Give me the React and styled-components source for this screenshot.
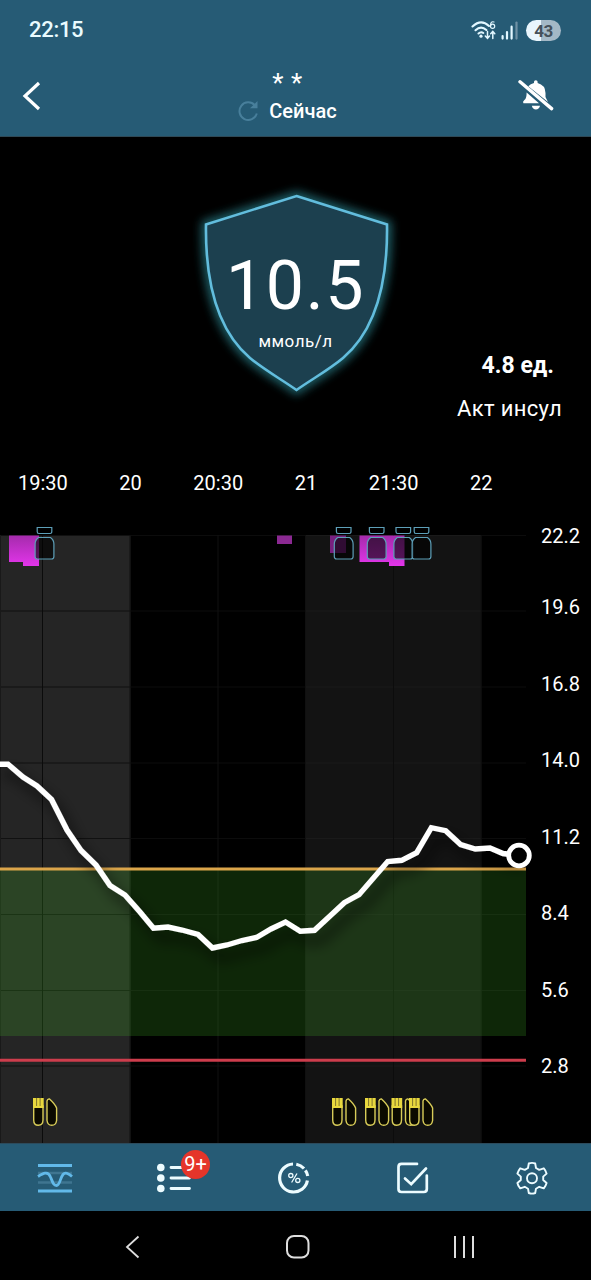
import React from "react";
import styled, { createGlobalStyle } from "styled-components";

const GlobalStyle = createGlobalStyle`
  * { box-sizing: border-box; }
  body { margin: 0; background: #000; }
`;

const Screen = styled.div`
  width: 591px;
  height: 1280px;
  display: flex;
  flex-direction: column;
  overflow: hidden;
  background: #000;
  color: #fff;
  font-family: Roboto, "Noto Sans", sans-serif;
`;

const Header = styled.header`
  height: 137px;
  flex: none;
  background: #265b75;
  border-bottom: 1px solid #2f4956;
`;

const StatusBar = styled.div`
  height: 60px;
  display: flex;
  align-items: center;
  padding: 0 30px 0 29px;
`;

const Clock = styled.span`
  flex: 1;
  font-size: 22px;
  line-height: 26px;
  font-weight: 500;
  color: #e9fbff;
  letter-spacing: -0.3px;
`;

const Battery = styled.span`
  width: 35px;
  height: 21px;
  margin-left: 6px;
  border-radius: 11px;
  background: linear-gradient(90deg, #e9f6fd 43%, #a4b8c6 43%);
  color: #45505a;
  font-size: 17px;
  line-height: 22px;
  font-weight: 700;
  text-align: center;
  letter-spacing: -0.5px;
`;

const TitleBar = styled.div`
  height: 76px;
  display: flex;
  align-items: center;
  justify-content: space-between;
  padding: 0 36px 4px 22px;
`;

const TitleGroup = styled.div`
  display: flex;
  flex-direction: column;
  align-items: center;
  padding-left: 16px;
`;

const Stars = styled.div`
  font-size: 26px;
  line-height: 30px;
  height: 30px;
  padding-top: 4px;
  letter-spacing: 0.6px;
`;

const Updated = styled.div`
  display: flex;
  align-items: center;
  gap: 9px;
  height: 34px;
  font-size: 20px;
  line-height: 24px;
  font-weight: 500;
`;

const Hero = styled.section`
  position: relative;
  height: 320px;
  flex: none;
  display: flex;
  justify-content: center;
  padding-top: 43px;
`;

const Shield = styled.div`
  width: 210px;
  height: 220px;
  display: grid;
  > * { grid-area: 1 / 1; }
`;

const Reading = styled.div`
  display: flex;
  flex-direction: column;
  align-items: center;
  padding-top: 66px;
  z-index: 1;
`;

const Value = styled.div`
  font-size: 68px;
  line-height: 80px;
  letter-spacing: 1.6px;
`;

const Unit = styled.div`
  font-size: 17px;
  line-height: 20px;
  margin-top: 5px;
  letter-spacing: 0.5px;
`;

const Insulin = styled.div`
  position: absolute;
  right: 29px;
  top: 215px;
  text-align: right;
`;

const Dose = styled.div`
  padding-right: 8px;
  font-size: 23px;
  line-height: 28px;
  font-weight: 700;
`;

const DoseLabel = styled.div`
  margin-top: 16px;
  font-size: 22px;
  line-height: 26px;
  letter-spacing: 0.35px;
`;

const TimeAxis = styled.div`
  display: grid;
  grid-template-columns: repeat(6, 87.7px);
  margin-left: -1px;
  height: 63px;
  flex: none;
  padding-top: 14px;
  font-size: 20px;
  line-height: 24px;
  text-align: center;
`;

const ChartRow = styled.section`
  height: 623px;
  flex: none;
  display: flex;
`;

const Plot = styled.svg`
  display: block;
  flex: none;
`;

const Scale = styled.div`
  padding: 4px 0 0 9px;
  font-size: 20px;
  line-height: 24px;
`;

const Tick = styled.div`
  height: ${(p) => p.$h}px;
`;

const TabBar = styled.nav`
  height: 68px;
  flex: none;
  display: grid;
  grid-template-columns: 115px 120px 118px 119px 119px;
  align-items: center;
  justify-items: center;
  background: #265b75;
  border-top: 1px solid #2c4b5c;
`;

const Tab = styled.div`
  position: relative;
  width: 36px;
  height: 36px;
  display: flex;
  margin-left: ${(p) => p.$shift || 0}px;
`;

const Badge = styled.span`
  position: absolute;
  left: 24px;
  top: -10px;
  width: 29px;
  height: 29px;
  border-radius: 50%;
  background: #e5352a;
  font-size: 20px;
  line-height: 29px;
  text-align: center;
`;

const SystemBar = styled.div`
  height: 69px;
  flex: none;
  display: flex;
  align-items: center;
  justify-content: space-between;
  padding: 3px 115px 0 123px;
`;

const times = ["19:30", "20", "20:30", "21", "21:30", "22"];
const ticks = [["22.2", 71], ["19.6", 76.5], ["16.8", 76.5], ["14.0", 76.5], ["11.2", 76.5], ["8.4", 76.5], ["5.6", 76.5], ["2.8", 40]];
const gridY = [535.5, 611, 687, 763, 838.5, 914.5, 990.5, 1066];
const gridX = [42.5, 130, 218, 305.5, 393.5, 481];
const trend =
  "-4,764.3 8,764.3 23,777 37,786 51.5,799.5 67,830 81,850.5 96,865 110,885.5 125,895 140,912 153.5,928.3 168,927 182,930 198,934.5 212.5,948 227,945 242,940.5 256.5,937.5 271,929 285.5,922 300.3,931.3 314.5,930.3 330,916 344.3,902.7 359,894.7 387.7,861.5 401.7,860.3 416.7,852.7 431.3,827.7 445.7,830.7 460.7,844.7 475.3,849 490,848 503,853.5 519,855.5";

function Vial({ x }) {
  return (
    <g transform={`translate(${x} 527)`} fill="#00000099" stroke="#5d9fb8" strokeWidth="1.2">
      <path d="M2.7.5H17.3V4.5Q17.3 6.5 15.8 6.5H4.2Q2.7 6.5 2.7 4.5Z" />
      <path d="M4 10.5H16Q19.4 13 19.4 17V29.5Q19.4 32 17 32H3Q.6 32 .6 29.5V17Q.6 13 4 10.5Z" />
    </g>
  );
}

function Meal({ x }) {
  return (
    <g transform={`translate(${x} 1098)`} fill="#0b0a00" stroke="#d8cc58" strokeWidth="1.4">
      <path d="M.7 8V22Q.7 27.3 5.3 27.3T10 22V8Z" />
      <path d="M0 0H10.7V10H0Z" fill="#e8d83e" stroke="none" />
      <path d="M3.6 0V8M7.1 0V8" stroke="#81742a" strokeWidth="1" />
      <path d="M14 3Q14.5 .7 16.5 1Q22 6 23.6 10V22.5Q23 27.3 18.8 27.3T14 22.5Z" />
    </g>
  );
}

function Chart() {
  return (
    <Plot width="532" height="623" viewBox="0 520 532 623">
      <defs>
        <linearGradient id="basal" x1="0" y1="0" x2="0" y2="1">
          <stop offset="0" stopColor="#a52bac" />
          <stop offset="1" stopColor="#e335eb" />
        </linearGradient>
        <filter id="lineShadow" x="-10%" y="-20%" width="120%" height="150%">
          <feDropShadow dx="7" dy="10" stdDeviation="7" floodColor="#000" floodOpacity="0.75" />
        </filter>
      </defs>
      <rect x="0" y="535" width="130.5" height="608" fill="#252525" />
      <rect x="305.5" y="535" width="176" height="608" fill="#131313" />
      <g strokeWidth="1">
        {gridY.map((y) => (
          <g key={y}>
            <path d={`M0 ${y}H130`} stroke="#111" />
            <path d={`M130 ${y}H305M481 ${y}H526`} stroke="#0c0c0c" />
            <path d={`M305 ${y}H481`} stroke="#1a1a1a" />
          </g>
        ))}
        {gridX.map((x, i) => (
          <path key={x} d={`M${x} 535V1143`} stroke={i === 0 ? "#0b0b0b" : i === 4 ? "#0c0c0c" : "#101010"} />
        ))}
        <path d="M.5 535V1143" stroke="#191919" />
      </g>
      <rect x="0" y="869" width="526" height="167" fill="rgb(70,195,40)" fillOpacity="0.2" />
      <path d="M0 869H526" stroke="#dba54a" strokeWidth="3" />
      <path d="M0 1060.3H526" stroke="#cd3d4c" strokeWidth="3" />
      <path d="M9 535.5H39V566H23V562H9Z" fill="url(#basal)" />
      <path d="M277 535.5H292V544H277Z" fill="#8b2992" />
      <path d="M330 535.5H346V553H330Z" fill="#782080" />
      <path d="M359.5 535.5H404.5V566H389V562H359.5Z" fill="url(#basal)" />
      <Vial x={34.5} />
      <Vial x={333.7} />
      <Vial x={366.7} />
      <Vial x={393.3} />
      <Vial x={411.5} />
      <Meal x={33} />
      <Meal x={332} />
      <Meal x={365} />
      <Meal x={391.5} />
      <Meal x={409} />
      <polyline points={trend} fill="none" stroke="#fff" strokeWidth="5.4" filter="url(#lineShadow)" />
      <circle cx="519" cy="855.5" r="10.3" fill="#000" stroke="#fff" strokeWidth="4.8" />
    </Plot>
  );
}

function StatusIcons() {
  return (
    <svg width="49" height="24" viewBox="0 0 49 24" fill="none" stroke="#e2f7ff" strokeLinecap="round">
      <g strokeWidth="2.1">
        <path d="M1.5 8.5Q10 .5 18 8" />
        <path d="M4.5 12.2Q10 7 15.4 12" />
        <path d="M7.5 15.5Q10 13.3 12.3 15" />
      </g>
      <circle cx="10" cy="18.2" r="1.6" fill="#e2f7ff" stroke="none" />
      <path d="M16.5 13.5V20M14.3 18L16.5 20.3L18.5 18M21.8 20.5V13.5M19.7 15.7L21.8 13.4L23.8 15.7" strokeWidth="1.5" />
      <path d="M23 4Q19.5 2.7 19.5 8" strokeWidth="1.2" />
      <circle cx="21.6" cy="8.3" r="2.1" strokeWidth="1.2" />
      <path d="M31.6 18V20.6M36 14V20.6M40.6 8.7V20.6" strokeWidth="2.2" />
      <path d="M45.5 4.5V20.6" strokeWidth="2.2" stroke="#6f91a4" />
    </svg>
  );
}

function BellOff() {
  return (
    <svg width="38" height="32" viewBox="0 0 38 32" fill="#fff">
      <path d="M11.3 6.3Q13.5 4 17 3V1.8Q17 .2 18.8 .2T20.6 1.8V3Q28.3 5 28.5 13V17L31 22Z" />
      <path d="M9.6 12.5L22 23.3H6.4Q5.2 21.8 7.4 20Q9.8 18.3 9.6 12.5Z" />
      <path d="M14.8 25.8H23Q22 29.6 18.9 29.6T14.8 25.8Z" />
      <path d="M3 1.8L34.6 28.6" stroke="#fff" strokeWidth="3.4" strokeLinecap="round" />
    </svg>
  );
}

export default function App() {
  return (
    <Screen>
      <GlobalStyle />
      <Header>
        <StatusBar>
          <Clock>22:15</Clock>
          <StatusIcons />
          <Battery>43</Battery>
        </StatusBar>
        <TitleBar>
          <svg width="20" height="30" viewBox="0 0 20 30" fill="none" stroke="#fff" strokeWidth="3.2">
            <path d="M17 2L3 15L17 28" />
          </svg>
          <TitleGroup>
            <Stars>* *</Stars>
            <Updated>
              <svg width="22" height="24" viewBox="0 0 22 24" fill="none" stroke="#487f9b" strokeWidth="2">
                <path d="M18.8 14.5A8.8 8.8 0 1 1 16.8 6.2" />
                <path d="M19.5 2V9.3H12Z" fill="#487f9b" stroke="none" />
              </svg>
              Сейчас
            </Updated>
          </TitleGroup>
          <BellOff />
        </TitleBar>
      </Header>

      <Hero>
        <Shield>
          <svg width="210" height="220" viewBox="190 180 210 220" overflow="visible">
            <defs>
              <filter id="glow" x="-20%" y="-20%" width="140%" height="140%">
                <feGaussianBlur stdDeviation="5" />
              </filter>
            </defs>
            <path id="shield" d="M295.5 196L386 224.5C387 295 369 335 342 358C327 370.5 311 379 295.5 390C280 379 264 370.5 249 358C222 335 204 295 205 224.5Z" fill="#1c404f" />
            <use href="#shield" stroke="#287a84" strokeWidth="9" filter="url(#glow)" opacity="0.8" />
            <use href="#shield" fill="none" stroke="#62bddd" strokeWidth="2.6" />
          </svg>
          <Reading>
            <Value>10.5</Value>
            <Unit>ммоль/л</Unit>
          </Reading>
        </Shield>
        <Insulin>
          <Dose>4.8 ед.</Dose>
          <DoseLabel>Акт инсул</DoseLabel>
        </Insulin>
      </Hero>

      <TimeAxis>
        {times.map((t) => <span key={t}>{t}</span>)}
      </TimeAxis>

      <ChartRow>
        <Chart />
        <Scale>
          {ticks.map(([label, h]) => <Tick key={label} $h={h}>{label}</Tick>)}
        </Scale>
      </ChartRow>

      <TabBar>
        <Tab $shift={-5}>
          <svg width="36" height="36" viewBox="0 0 36 36" fill="none">
            <path d="M1 13H35M1 22.5H35" stroke="#3f7590" strokeWidth="2.6" />
            <path d="M1 5.5H35M1 31H35" stroke="#62b9e9" strokeWidth="2.8" />
            <path d="M1 16.5C6 13.5 11 10.5 13.5 17C16 23 16.5 25.5 19.5 25.5C23 25.5 23 18 26 14.5C28.5 11.5 32 14 35 16.5" stroke="#62b9e9" strokeWidth="2.8" />
          </svg>
        </Tab>
        <Tab>
          <svg width="36" height="36" viewBox="0 0 36 36" fill="#edfcff" stroke="#edfcff" strokeWidth="2.8" strokeLinecap="round">
            <path d="M14 7.5H32.5M14 18H32.5M14 28.5H32.5" />
            <circle cx="3.8" cy="7.5" r="3.8" stroke="none" />
            <circle cx="3.8" cy="18" r="3.8" stroke="none" />
            <circle cx="3.8" cy="28.5" r="3.8" stroke="none" />
          </svg>
          <Badge>9+</Badge>
        </Tab>
        <Tab>
          <svg width="36" height="36" viewBox="0 0 36 36" fill="none" stroke="#edfcff">
            <g strokeWidth="3.2">
              <path d="M17 4A14 14 0 1 0 31.4 20.5" />
              <path d="M20.3 4.2A14 14 0 0 1 28 8.5" />
              <path d="M29.4 10.4A14 14 0 0 1 31.7 16" />
            </g>
            <g strokeWidth="1.3">
              <circle cx="14.8" cy="15.6" r="2.1" />
              <circle cx="21.8" cy="20.4" r="2.1" />
              <path d="M21 13.5L15.6 22.5" />
            </g>
          </svg>
        </Tab>
        <Tab>
          <svg width="36" height="36" viewBox="0 0 36 36" fill="none" stroke="#edfcff" strokeWidth="2.7" strokeLinecap="round">
            <path d="M22 3.9H6.5Q3.5 3.9 3.5 7V29Q3.5 32 6.5 32H28.8Q31.8 32 31.8 29V15.5" />
            <path d="M10 18.5L16.2 24.2L31 8.5" />
          </svg>
        </Tab>
        <Tab>
          <svg width="36" height="36" viewBox="0 0 36 36" fill="none" stroke="#edfcff" strokeWidth="1.9" strokeLinejoin="round">
            <path d="M14.8 3.5Q18 2.2 21.2 3.5L22 8L25.2 9.8L29.8 8.3Q32 10.7 32.6 13.6L29.2 16.6V20L32.6 23Q31.8 26 29.8 28.4L25.2 26.8L22 28.7L21.2 33Q18 34.2 14.8 33L14 28.7L10.8 26.8L6.2 28.4Q4 26 3.4 23L6.8 20V16.6L3.4 13.6Q4.2 10.7 6.2 8.3L10.8 9.8L14 8Z" />
            <circle cx="18" cy="18.3" r="5" />
          </svg>
        </Tab>
      </TabBar>

      <SystemBar>
        <svg width="20" height="26" viewBox="0 0 20 26" fill="none" stroke="#dedede" strokeWidth="1.8">
          <path d="M15.5 2.5L4 13L15.5 23.5" />
        </svg>
        <svg width="26" height="26" viewBox="0 0 26 26" fill="none" stroke="#dedede" strokeWidth="2">
          <rect x="2" y="2" width="21.5" height="21.5" rx="7" />
        </svg>
        <svg width="24" height="26" viewBox="0 0 24 26" fill="none" stroke="#dedede" strokeWidth="2">
          <path d="M3 2V24M12 2V24M21 2V24" />
        </svg>
      </SystemBar>
    </Screen>
  );
}
